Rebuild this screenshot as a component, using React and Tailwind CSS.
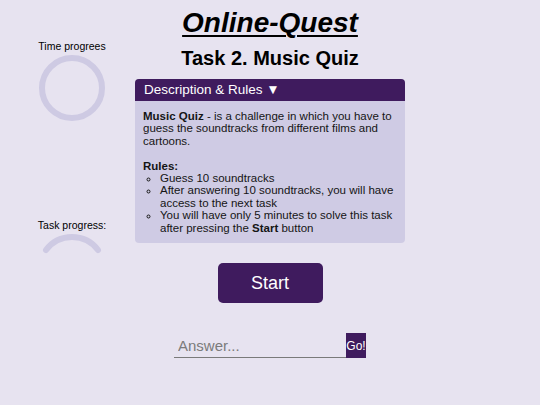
export default function App() {
  return (
    <div className="min-h-[405px] w-full bg-[#e7e3f0] font-['Liberation_Sans',Arial,sans-serif] text-black">
      <div className="grid grid-cols-[135px_270px_1fr]">
        {/* left side: progress widgets */}
        <aside className="flex flex-col items-center w-[108px] pl-[36px] pt-[40px]">
          <p className="text-[10.5px] leading-[12px]">Time progrees</p>
          <svg width="70" height="70" viewBox="0 0 70 70" className="mt-[1px]">
            <circle cx="35" cy="35" r="30" fill="none" stroke="#cecae3" strokeWidth="6" />
          </svg>
          <p className="text-[10.5px] leading-[12px] mt-[96px]">Task progress:</p>
          <svg width="68" height="24" viewBox="0 0 68 24" className="mt-[2px]">
            <path d="M8 17 A32.5 32.5 0 0 1 60 17" fill="none" stroke="#cecae3" strokeWidth="6" strokeLinecap="round" />
          </svg>
        </aside>

        {/* main column */}
        <main className="flex flex-col items-center">
          <h1 className="mt-[7px] text-[28px] leading-[32px] font-bold italic underline decoration-2 underline-offset-[3px]">
            Online-Quest
          </h1>
          <h2 className="mt-[7px] text-[20px] leading-[24px] font-bold">Task 2. Music Quiz</h2>

          <section className="mt-[9px] w-[270px] rounded-[4px] overflow-hidden bg-[#cfcbe4]">
            <div className="h-[22px] bg-[#3f1b5e] px-[9px] flex items-center text-white text-[13.5px]">
              Description &amp; Rules ▼
            </div>
            <div className="px-[8px] pt-[9px] pb-[9px] text-[11.5px] leading-[12.4px] text-[#151515]">
              <p>
                <b>Music Quiz</b> - is a challenge in which you have to guess the soundtracks from different films and cartoons.
              </p>
              <p className="mt-[12.4px] font-bold">Rules:</p>
              <ul className="list-[circle] pl-[17px]">
                <li>Guess 10 soundtracks</li>
                <li>After answering 10 soundtracks, you will have access to the next task</li>
                <li>
                  You will have only 5 minutes to solve this task after pressing the <b>Start</b> button
                </li>
              </ul>
            </div>
          </section>

          <button className="mt-[20px] w-[105px] h-[40px] rounded-[5px] bg-[#3f1b5e] text-white text-[18px]">
            Start
          </button>

          <div className="mt-[30px] flex items-end">
            <input
              placeholder="Answer..."
              className="w-[172px] h-[25px] bg-transparent border-b border-[#7a7a7a] px-[4px] text-[15px] outline-none placeholder:text-[#7b7b7b]"
            />
            <button className="w-[20px] h-[25px] bg-[#3f1b5e] text-white text-[12px] leading-none px-0">Go!</button>
          </div>
        </main>
        <div />
      </div>
    </div>
  );
}
